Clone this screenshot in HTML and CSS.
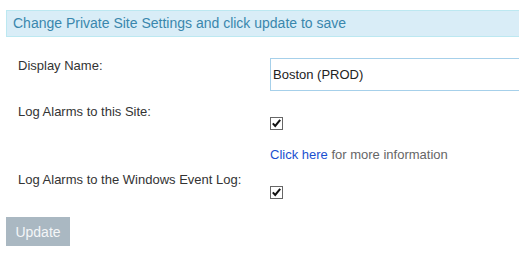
FILE: index.html
```html
<!DOCTYPE html>
<html lang="en">
<head>
    <meta charset="UTF-8">
    <title>Private Site Settings</title>
    <link rel="stylesheet" href="styles.css">
</head>
<body>
    <div class="page">
        <div class="alert-info">Change Private Site Settings and click update to save</div>

        <div class="settings">
            <div class="label">Display Name:</div>
            <div class="value">
                <input class="text-input" type="text" value="Boston (PROD)">
            </div>

            <div class="label">Log Alarms to this Site:</div>
            <div class="value value-site">
                <span class="check">
                    <svg width="11" height="11" viewBox="0 0 11 11"><path d="M1.8 5.4 L4.2 8 L9.2 1.8" fill="none" stroke="#111" stroke-width="2"/></svg>
                </span>
                <p class="info"><a href="#">Click here</a> for more information</p>
            </div>

            <div class="label">Log Alarms to the Windows Event Log:</div>
            <div class="value value-event">
                <span class="check">
                    <svg width="11" height="11" viewBox="0 0 11 11"><path d="M1.8 5.4 L4.2 8 L9.2 1.8" fill="none" stroke="#111" stroke-width="2"/></svg>
                </span>
            </div>
        </div>

        <button class="btn-update" disabled>Update</button>
    </div>
</body>
</html>
```

FILE: styles.css
```css
body {
    margin: 0;
    font-family: Arial, "Liberation Sans", sans-serif;
    font-size: 13px;
    color: #333;
    background: #fff;
    overflow: hidden;
}

.page {
    width: 580px;
    padding: 10px 0 0 6px;
}

/* header bar */
.alert-info {
    background-color: #d9edf7;
    border: 1px solid #bce8f1;
    color: #3a87ad;
    font-size: 14px;
    height: 25px;
    line-height: 25px;
    padding-left: 6px;
}

.settings {
    display: grid;
    grid-template-columns: 264px 1fr;
    margin-top: 21px;
}

.label {
    padding-left: 12px;
    color: #333;
    line-height: 15px;
}

.value {
    padding-bottom: 13px;
}

.text-input {
    display: block;
    box-sizing: border-box;
    width: 260px;
    height: 33px;
    margin: 0;
    border: 1px solid #a6d0ea;
    padding: 0 2px;
    font-family: Arial, "Liberation Sans", sans-serif;
    font-size: 13px;
    color: #222;
    outline: none;
}

.value-site {
    padding-top: 13px;
    padding-bottom: 10px;
}

.value-event {
    padding-top: 14px;
    padding-bottom: 10px;
}

/* old-style checked box */
.check {
    display: block;
    box-sizing: border-box;
    width: 13px;
    height: 13px;
    border: 1px solid #666;
    background: #fff;
}

.check svg {
    display: block;
}

.info {
    margin: 17px 0 0;
    line-height: 15px;
    color: #666;
}

.info a {
    color: #1a4fd0;
    text-decoration: none;
}

.btn-update {
    display: block;
    margin-top: 8px;
    width: 64px;
    height: 29px;
    border: none;
    background-color: #aab8c2;
    color: #f4f6f8;
    font-family: Arial, "Liberation Sans", sans-serif;
    font-size: 14px;
    padding: 0;
}
```
